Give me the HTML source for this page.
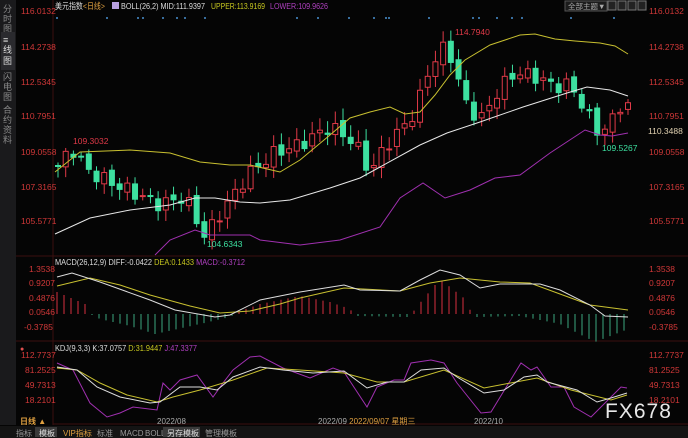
<!DOCTYPE html><html><head><meta charset="utf-8"><style>
body{margin:0;background:#000;width:688px;height:438px;overflow:hidden;font-family:"Liberation Sans","Noto Sans CJK SC",sans-serif}
svg{display:block}
</style></head><body>
<svg id="s" width="688" height="438" xmlns="http://www.w3.org/2000/svg" font-family="Liberation Sans, Noto Sans CJK SC, sans-serif">
<rect width="688" height="438" fill="#050505"/>
<rect x="0" y="0" width="16" height="425" fill="#1a1a1c"/>
<g fill="#8a8a8a" font-size="9">
<text x="3" y="12">分</text><text x="3" y="22">时</text><text x="3" y="32">图</text>
<rect x="1" y="32" width="14" height="38" fill="#2a2a2e"/>
<text x="3" y="43" fill="#ddd">≡</text><text x="3" y="53" fill="#ddd">线</text><text x="3" y="64" fill="#ddd">图</text>
<text x="3" y="80">闪</text><text x="3" y="90">电</text><text x="3" y="100">图</text>
<text x="3" y="113">合</text><text x="3" y="123">约</text><text x="3" y="133">资</text><text x="3" y="143">料</text>
</g>
<line x1="53" y1="0" x2="53" y2="425" stroke="#3a1010"/>
<line x1="16" y1="256" x2="688" y2="256" stroke="#3a1010"/>
<line x1="16" y1="341" x2="688" y2="341" stroke="#3a1010"/>
<line x1="53" y1="424" x2="688" y2="424" stroke="#3a1010"/>
<g font-size="8.5" fill="#d03838">
<text x="21" y="14">116.0132</text><text x="21" y="50">114.2738</text><text x="21" y="85">112.5345</text><text x="21" y="119">110.7951</text><text x="21" y="155">109.0558</text><text x="21" y="190">107.3165</text><text x="21" y="224">105.5771</text>
<text x="649" y="14">116.0132</text><text x="649" y="50">114.2738</text><text x="649" y="85">112.5345</text><text x="649" y="119">110.7951</text><text x="649" y="155">109.0558</text><text x="649" y="190">107.3165</text><text x="649" y="224">105.5771</text>
<text x="648" y="134" fill="#e0d0b0">110.3488</text>
<text x="29" y="272">1.3538</text><text x="29" y="286">0.9207</text><text x="29" y="301">0.4876</text><text x="29" y="315">0.0546</text><text x="24" y="330">-0.3785</text>
<text x="649" y="272">1.3538</text><text x="649" y="286">0.9207</text><text x="649" y="301">0.4876</text><text x="649" y="315">0.0546</text><text x="649" y="330">-0.3785</text>
<text x="21" y="358">112.7737</text><text x="25" y="373">81.2525</text><text x="25" y="388">49.7313</text><text x="25" y="403">18.2101</text>
<text x="649" y="358">112.7737</text><text x="649" y="373">81.2525</text><text x="649" y="388">49.7313</text><text x="649" y="403">18.2101</text>
</g>
<g font-size="8.5">
<text x="55" y="9" fill="#ddd" textLength="50" lengthAdjust="spacingAndGlyphs">美元指数<tspan fill="#e0a040">&lt;日线&gt;</tspan></text>
<rect x="112" y="2" width="7" height="7" fill="#b8a0e0"/>
<text x="121" y="9" fill="#ddd" textLength="84" lengthAdjust="spacingAndGlyphs">BOLL(26,2) MID:111.9397</text>
<text x="211" y="9" fill="#c8c820" textLength="54" lengthAdjust="spacingAndGlyphs">UPPER:113.9169</text>
<text x="270" y="9" fill="#b040c0" textLength="58" lengthAdjust="spacingAndGlyphs">LOWER:109.9626</text>
<text x="55" y="265" fill="#ddd" textLength="190" lengthAdjust="spacingAndGlyphs">MACD(26,12,9) DIFF:-0.0422 <tspan fill="#c8c820">DEA:0.1433</tspan> <tspan fill="#b040c0">MACD:-0.3712</tspan></text>
<text x="55" y="351" fill="#ddd" textLength="142" lengthAdjust="spacingAndGlyphs">KDJ(9,3,3) K:37.0757 <tspan fill="#c8c820">D:31.9447</tspan> <tspan fill="#b040c0">J:47.3377</tspan></text>
<text x="20" y="351" fill="#e05050" font-size="7">●</text>
<text x="157" y="424" fill="#aaa" font-size="8">2022/08</text>
<text x="318" y="424" fill="#aaa" font-size="8">2022/09 <tspan fill="#e0a040">2022/09/07 星期三</tspan></text>
<text x="474" y="424" fill="#aaa" font-size="8">2022/10</text>
<text x="20" y="424" fill="#e0a040" font-weight="bold" font-size="8">日线 ▲</text>
</g>
<rect x="565" y="1" width="42" height="10" fill="#1c1c1c" stroke="#555"/>
<text x="568" y="9" font-size="7.5" fill="#aaa">全部主题▼</text>
<g fill="#222" stroke="#777"><rect x="608" y="1" width="8" height="9"/><rect x="618" y="1" width="8" height="9"/><rect x="628" y="1" width="8" height="9"/><rect x="638" y="1" width="8" height="9"/></g>
<text x="605" y="418" font-size="21" fill="#e8e8e8" letter-spacing="1">FX678</text>
<rect x="0" y="426" width="688" height="12" fill="#141414"/>
<g font-size="8" fill="#999">
<text x="16" y="436">指标</text>
<rect x="35" y="427" width="22" height="10" fill="#3a3a3a"/><text x="39" y="436" fill="#ddd">模板</text>
<text x="63" y="436" fill="#e0a040">VIP指标</text>
<text x="97" y="436">标准</text><text x="120" y="436">MACD</text><text x="145" y="436">BOLL</text>
<rect x="163" y="427" width="37" height="10" fill="#3a3a3a"/><text x="167" y="436" fill="#ddd">另存模板</text>
<text x="205" y="436">管理模板</text>
</g>
<g id="g"></g>
</svg>
<script>
var g=document.getElementById('g'),NS='http://www.w3.org/2000/svg';
function el(t,a){var e=document.createElementNS(NS,t);for(var k in a)e.setAttribute(k,a[k]);g.appendChild(e);return e}
function pl(p,c){el('polyline',{points:p.map(function(q){return q.join(',')}).join(' '),fill:'none',stroke:c,'stroke-width':1})}
function interp(p,x){for(var i=0;i<p.length-1;i++){if(x<=p[i+1][0]){var t=(x-p[i][0])/(p[i+1][0]-p[i][0]);return p[i][1]+t*(p[i+1][1]-p[i][1])}}return p[p.length-1][1]}
function Y(v){return 12+(116.0132-v)*20.03}
var kp=[[58,108.3],[72,109.2],[90,108.0],[120,107.3],[160,106.4],[185,106.8],[205,104.8],[225,106.3],[250,108.0],[275,109.0],[300,109.4],[330,110.3],[355,109.5],[370,108.0],[385,109.3],[400,110.1],[415,111.0],[430,113.3],[445,114.3],[452,113.7],[465,111.5],[480,110.6],[500,112.2],[515,113.0],[535,112.8],[555,112.3],[570,112.4],[580,111.6],[592,110.5],[600,109.9],[612,110.6],[622,111.5],[628,111.3]];
var n=75,x0=58,dx=(628-58)/(n-1),prev=108.2;
for(var i=0;i<n;i++){var x=x0+i*dx,c=interp(kp,x)+Math.sin(i*2.3)*0.35,o=prev+Math.cos(i*1.7)*0.15;
var hi=Math.max(o,c)+0.15+Math.abs(Math.sin(i*3.1))*0.45,lo=Math.min(o,c)-0.15-Math.abs(Math.cos(i*2.7))*0.4;
var up=c>=o,col=up?'#e03a48':'#3de0a0';
el('line',{x1:x,y1:Y(hi),x2:x,y2:Y(lo),stroke:col});
var t=Y(Math.max(o,c)),h=Math.max(1,Math.abs(Y(o)-Y(c)));
el('rect',{x:x-2.5,y:t,width:5,height:h,fill:up?'#050505':col,stroke:col,'stroke-width':1});prev=c;}
pl([[55,172],[80,152],[130,150],[170,153],[200,162],[230,165],[250,165],[280,172],[300,160],[330,135],[350,118],[370,112],[390,107],[405,114],[420,112],[435,95],[450,75],[465,60],[490,45],[520,35],[535,34],[555,39],[575,41],[600,43],[615,46],[628,54]],'#c8c030');
pl([[55,234],[90,218],[130,210],[170,205],[195,198],[215,198],[240,202],[260,203],[290,200],[330,188],[360,178],[380,167],[420,145],[447,133],[480,122],[523,107],[567,93],[587,87],[610,90],[628,96]],'#e8e8e8');
pl([[155,255],[170,240],[195,230],[210,235],[250,235],[260,240],[300,245],[340,240],[380,227],[400,198],[423,183],[445,198],[470,190],[495,178],[520,175],[550,153],[585,130],[600,135],[612,136],[628,133]],'#a030b0');
el('text',{x:73,y:144,fill:'#e03a48','font-size':8.5}).textContent='109.3032';
el('text',{x:455,y:35,fill:'#e03a48','font-size':8.5}).textContent='114.7940';
el('text',{x:207,y:247,fill:'#3de0a0','font-size':8.5}).textContent='104.6343';
el('text',{x:602,y:151,fill:'#3de0a0','font-size':8.5}).textContent='109.5267';
// MACD
var W=[[57,277],[72,273],[100,282],[150,300],[175,310],[215,317],[230,315],[260,300],[300,292],[344,285],[360,290],[400,291],[420,280],[440,270],[460,275],[480,288],[500,284],[540,284],[560,290],[590,305],[605,316],[628,317]];
var D=[[57,286],[90,278],[120,285],[150,295],[190,306],[220,313],[250,311],[280,304],[300,298],[344,288],[400,291],[430,283],[460,278],[500,282],[530,283],[560,294],[590,305],[628,310]];
var HH=[[57,22],[85,10],[92,-1],[100,-5],[130,-12],[155,-20],[200,-10],[230,-3],[240,3],[260,10],[300,18],[330,12],[350,5],[355,-2],[410,-3],[415,5],[440,35],[465,15],[472,0],[477,-3],[520,-2],[560,-10],[595,-28],[628,-15]];
for(var x=57;x<=628;x+=7){var h=interp(HH,x);var y0=314;
el('line',{x1:x,y1:y0,x2:x,y2:y0-h,stroke:h>0?'#d83040':'#3aa880'});}
pl(D,'#c8c030');pl(W,'#ddd');
// KDJ
var J=[[57,363],[73,370],[90,403],[107,417],[120,413],[133,407],[157,410],[163,383],[170,390],[180,380],[197,375],[213,397],[223,383],[233,370],[250,357],[260,356],[283,368],[310,378],[333,368],[344,372],[367,407],[377,387],[394,380],[404,380],[411,363],[431,360],[444,363],[457,383],[481,413],[491,412],[521,363],[531,370],[537,367],[551,387],[564,387],[574,407],[591,417],[611,397],[621,387],[627,388]];
var K=[[57,367],[77,370],[97,387],[120,397],[150,403],[160,402],[180,387],[200,387],[217,390],[233,377],[260,367],[283,370],[313,373],[344,371],[367,388],[387,382],[404,382],[421,370],[444,368],[457,377],[484,393],[504,390],[524,377],[537,375],[547,382],[577,390],[597,402],[611,398],[627,393]];
var Dk=[[57,368],[77,370],[100,383],[127,395],[157,402],[173,397],[200,390],[233,380],[267,368],[300,370],[344,373],[377,382],[404,382],[444,370],[484,388],[537,378],[571,390],[611,400],[627,395]];
pl(J,'#a030b0');pl(Dk,'#c8c030');pl(K,'#ddd');
[57,107,138,143,163,177,185,205,297,318,349,374,386,389,429,473,479,497,512,522,571,614].forEach(function(x){el('circle',{cx:x,cy:18,r:1,fill:'#4a90d0'})});
</script>
</body></html>
